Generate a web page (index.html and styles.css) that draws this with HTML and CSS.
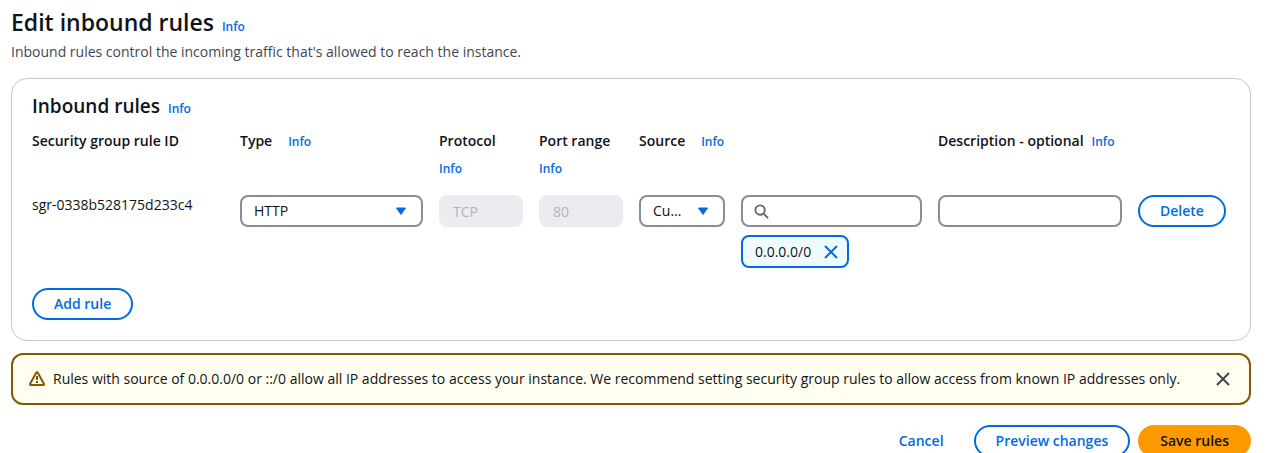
FILE: index.html
```html
<!DOCTYPE html>
<html lang="en">
<head>
<meta charset="utf-8">
<title>Edit inbound rules</title>
<link rel="stylesheet" href="styles.css">
</head>
<body>
<main class="page">
  <header class="page-header">
    <div class="heading">
      <h1 class="page-title">Edit inbound rules</h1>
      <a class="info" href="#info">Info</a>
    </div>
    <p class="page-text">Inbound rules control the incoming traffic that's allowed to reach the instance.</p>
  </header>

  <section class="panel">
    <div class="heading">
      <h2 class="panel-title">Inbound rules</h2>
      <a class="info" href="#info-rules">Info</a>
    </div>

    <div class="rules">
      <div class="label"><span>Security group rule ID</span></div>
      <div class="label"><label for="type">Type</label><a class="info" href="#info-type">Info</a></div>
      <div class="label"><label for="protocol">Protocol</label><a class="info" href="#info-protocol">Info</a></div>
      <div class="label"><label for="port">Port range</label><a class="info" href="#info-port">Info</a></div>
      <div class="label label-source"><label for="source">Source</label><a class="info" href="#info-source">Info</a></div>
      <div class="label label-tight"><label for="description">Description - optional</label><a class="info" href="#info-description">Info</a></div>
      <div></div>

      <div class="rule-id">sgr-0338b528175d233c4</div>
      <div class="select">
        <select id="type" class="field"><option>HTTP</option></select>
        <svg class="caret" viewBox="0 0 12 9" aria-hidden="true"><path d="M1.500 1h9L6 7.500z"/></svg>
      </div>
      <div><input id="protocol" class="field" type="text" value="TCP" disabled></div>
      <div><input id="port" class="field" type="text" value="80" disabled></div>
      <div class="select">
        <select id="source" class="field"><option>Custom</option></select>
        <svg class="caret" viewBox="0 0 12 9" aria-hidden="true"><path d="M1.500 1h9L6 7.500z"/></svg>
      </div>
      <div class="source-value">
        <div class="search">
          <input class="field" type="search" aria-label="Source value">
          <svg class="search-icon" viewBox="0 0 16 16" aria-hidden="true"><circle cx="6.500" cy="6.500" r="5"/><path d="M10.200 10.200L15 15"/></svg>
        </div>
        <div class="token">
          <span>0.0.0.0/0</span>
          <button class="close" type="button" aria-label="Remove 0.0.0.0/0"><svg viewBox="0 0 16 16" aria-hidden="true"><path d="M2 2l12 12M14 2L2 14"/></svg></button>
        </div>
      </div>
      <div><input id="description" class="field" type="text"></div>
      <div><button class="button" type="button">Delete</button></div>
    </div>

    <button class="button" type="button">Add rule</button>
  </section>

  <div class="alert" role="alert">
    <svg class="alert-icon" viewBox="0 0 16 16" aria-hidden="true"><path d="M7.200 1.700Q8 .6 8.800 1.700L15 13Q15.300 14 14.300 14H1.700Q.7 14 1 13z"/><path d="M8 5v4M8 10v2"/></svg>
    <p class="alert-text">Rules with source of 0.0.0.0/0 or ::/0 allow all IP addresses to access your instance. We recommend setting security group rules to allow access from known IP addresses only.</p>
    <button class="close close-alert" type="button" aria-label="Dismiss"><svg viewBox="0 0 16 16" aria-hidden="true"><path d="M2 2l12 12M14 2L2 14"/></svg></button>
  </div>

  <footer class="actions">
    <button class="button button-link" type="button">Cancel</button>
    <button class="button" type="button">Preview changes</button>
    <button class="button button-primary" type="button">Save rules</button>
  </footer>
</main>
</body>
</html>
```
FILE: styles.css
```css
* {
  box-sizing: border-box;
}

body {
  margin: 0;
  background: #fff;
  color: #0f141a;
  font: 14px/20px "Open Sans", "Noto Sans", sans-serif;
}

h1, h2, p {
  margin: 0;
}

.page {
  padding: 7px 37px 0 11px;
}

.page-header {
  margin-bottom: 16px;
}

.heading {
  display: flex;
  align-items: baseline;
  gap: 8px;
}

.page-title {
  font-size: 23px;
  font-weight: 600;
  line-height: 30px;
}

.page-text {
  margin-top: 5px;
  color: #424650;
}

.info {
  color: #006ce0;
  font-size: 12px;
  font-weight: 600;
  text-decoration: none;
}

.panel {
  padding: 15px 20px 20px;
  border: 1px solid #c6c6cd;
  border-radius: 16px;
}

.panel-title {
  font-size: 19px;
  font-weight: 600;
  line-height: 24px;
}

.rules {
  display: grid;
  grid-template-columns: 192fr 183fr 84fr 84fr 86fr 181fr 184fr 92fr;
  column-gap: 16px;
  row-gap: 12px;
  margin: 8px 0 20px;
}

.rules > * {
  min-width: 0;
}

.label {
  display: flex;
  flex-wrap: wrap;
  align-content: flex-start;
  align-items: baseline;
  column-gap: 16px;
  font-weight: 600;
  line-height: 28px;
  white-space: nowrap;
}

.label-source {
  grid-column: span 2;
}

.label-tight {
  column-gap: 8px;
}

.rule-id {
  white-space: nowrap;
}

.field {
  display: block;
  width: 100%;
  height: 32px;
  margin: 0;
  padding: 4px 12px;
  appearance: none;
  background: #fff;
  border: 2px solid #8c8c94;
  border-radius: 8px;
  color: #0f141a;
  font: inherit;
}

.field:disabled {
  background: #ebebf0;
  border-color: #ebebf0;
  color: #b4b4bb;
}

.select,
.search {
  position: relative;
}

.select .field {
  padding-right: 38px;
  overflow: hidden;
  text-overflow: ellipsis;
  white-space: nowrap;
}

.caret {
  position: absolute;
  top: 12px;
  right: 16px;
  width: 12px;
  height: 9px;
  fill: #006ce0;
  stroke: #006ce0;
  stroke-linejoin: round;
  pointer-events: none;
}

.search .field {
  padding-left: 36px;
}

.search-icon {
  position: absolute;
  top: 9px;
  left: 13px;
  width: 15px;
  height: 15px;
  fill: none;
  stroke: #656871;
  stroke-width: 2;
}

.source-value {
  display: flex;
  flex-direction: column;
  align-items: flex-start;
  gap: 8px;
}

.search {
  width: 100%;
}

.token {
  display: flex;
  align-items: center;
  gap: 12px;
  height: 33px;
  padding: 0 8px 0 12px;
  background: #f0fbff;
  border: 2px solid #006ce0;
  border-radius: 8px;
}

.close {
  display: flex;
  padding: 0;
  background: none;
  border: 0;
  color: #006ce0;
}

.close svg {
  width: 16px;
  height: 16px;
  fill: none;
  stroke: currentColor;
  stroke-width: 2;
}

.button {
  height: 32px;
  padding: 4px 20px;
  background: #fff;
  border: 2px solid #006ce0;
  border-radius: 16px;
  color: #006ce0;
  font: inherit;
  font-weight: 600;
  white-space: nowrap;
}

.button-link {
  border-color: transparent;
}

.button-primary {
  background: #ff9900;
  border-color: #ff9900;
  color: #0f141a;
}

.alert {
  display: flex;
  align-items: center;
  gap: 8px;
  min-height: 52px;
  margin-top: 12px;
  padding: 8px 18px 8px 16px;
  background: #fffef0;
  border: 2px solid #855900;
  border-radius: 12px;
}

.alert-icon {
  flex: none;
  width: 16px;
  height: 16px;
  fill: none;
  stroke: #855900;
  stroke-width: 2;
  stroke-linejoin: round;
}

.alert-text {
  flex: 1;
}

.close-alert {
  color: #424650;
}

.actions {
  display: flex;
  justify-content: flex-end;
  gap: 8px;
  margin-top: 20px;
}
```
